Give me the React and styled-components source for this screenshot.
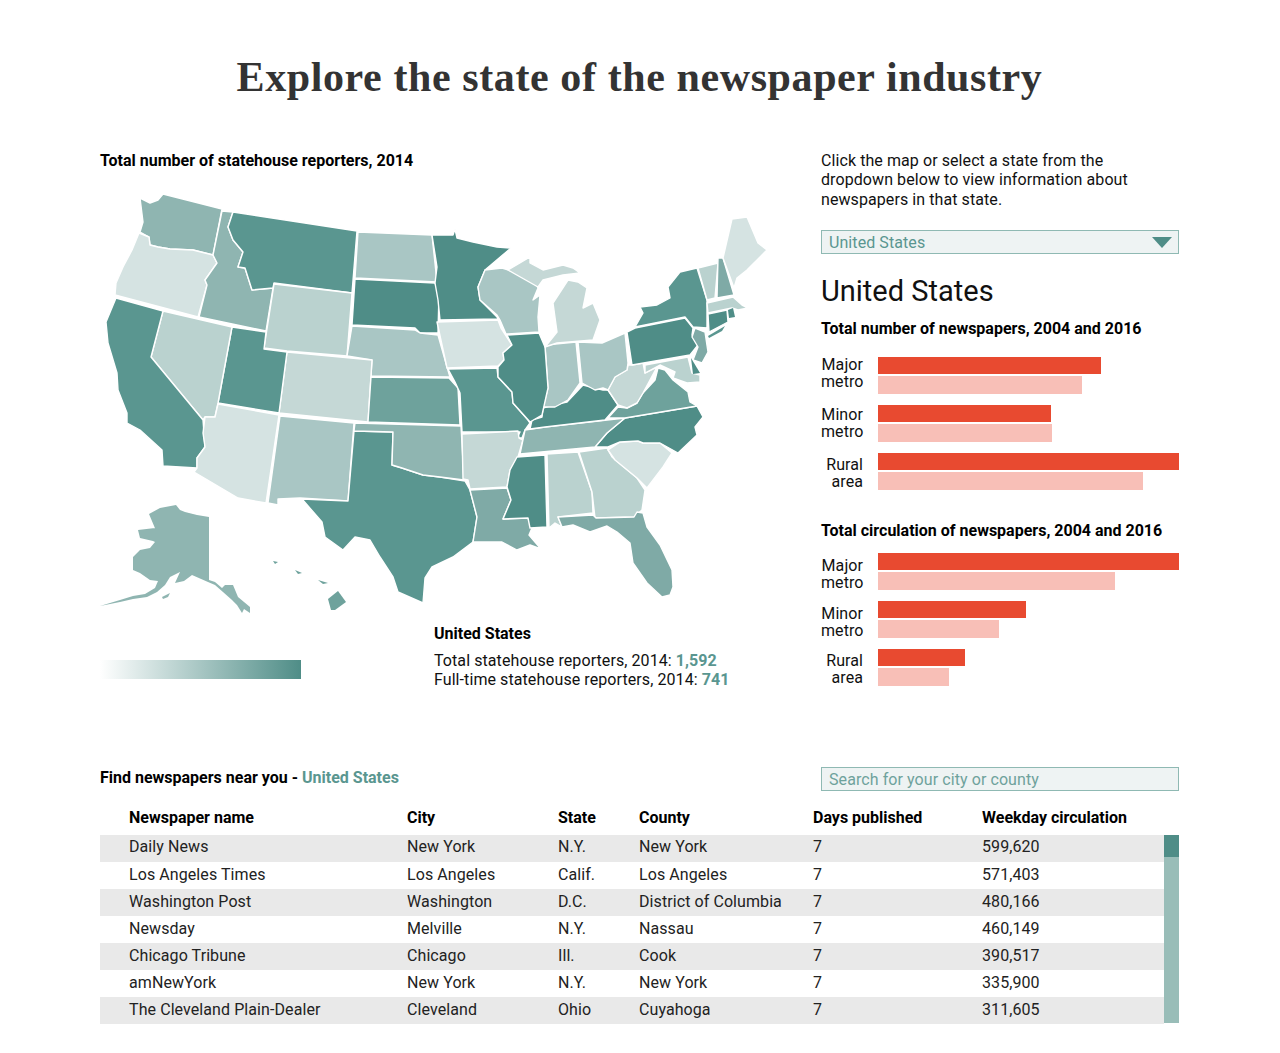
import styled, { createGlobalStyle } from "styled-components";

const GlobalStyle = createGlobalStyle`
  body {
    margin: 0;
    background: #fff;
    color: #111;
    font-family: Roboto, "Liberation Sans", sans-serif;
    font-size: 16px;
    line-height: 19px;
    letter-spacing: 0.08px;
  }
`;

const C = {
  a: "#4f8d87",
  b: "#5a9690",
  c: "#6ea29c",
  d: "#7faaa6",
  e: "#8fb5b1",
  f: "#a9c6c4",
  g: "#bad2cf",
  h: "#c5d8d6",
  i: "#d5e3e2",
};

// page coordinates, traced from the map at 1:1
const STATES = [
  ["e", "140,198 150,203 158,200 163,194 222,209 213,255 193,250 170,249 158,247 150,245 149,237 140,232 143,222"],
  ["i", "139,233 149,237 150,245 158,247 170,249 193,250 213,255 217,263 205,280 207,285 198,317 115,295 116,283 123,267 132,250"],
  ["e", "222,211 233,212 228,227 233,240 243,252 238,267 245,268 252,290 273,288 266,331 199,317 207,285 205,280 217,263 213,255"],
  ["b", "233,212 357,231 352,293 274,283 273,288 252,290 245,268 238,267 243,252 233,240 228,227"],
  ["g", "274,284 352,293 347,356 287,351 264,348"],
  ["f", "358,232 432,235 437,282 355,278"],
  ["a", "355,279 435,283 439,293 438,333 420,333 415,328 352,325"],
  ["f", "352,326 415,330 420,333 438,335 447,367 450,377 371,376 372,360 347,356"],
  ["h", "287,352 372,360 368,422 279,413"],
  ["b", "232,327 266,332 264,349 287,352 279,413 218,403"],
  ["g", "163,311 232,327 218,403 215,417 205,417 203,420 151,357"],
  ["b", "116,298 163,311 151,357 203,420 205,447 197,458 197,468 163,466 162,450 140,430 127,423 127,413 118,390 117,373 108,343 106,322"],
  ["i", "218,404 279,415 266,503 238,498 194,472 197,468 197,458 205,447 203,433 205,417 215,417"],
  ["f", "280,416 354,423 348,501 300,498 278,499 278,505 268,503"],
  ["b", "354,431 393,432 392,465 402,468 423,475 440,477 465,481 470,490 477,517 473,542 453,557 432,567 425,578 423,603 398,592 393,577 380,557 370,540 355,537 343,550 325,537 322,522 302,499 348,501"],
  ["e", "355,423 461,426 464,480 440,477 423,475 402,468 392,465 393,432 354,431"],
  ["c", "371,377 449,378 458,388 460,425 368,422"],
  ["a", "432,235 453,235 455,229 457,238 473,242 497,247 511,248 485,270 478,287 480,300 497,317 498,319 440,320 438,300 435,283 437,267"],
  ["i", "437,322 498,320 501,328 512,345 503,353 504,360 498,366 447,368"],
  ["b", "448,369 497,368 498,377 512,392 513,403 528,420 530,423 525,430 522,438 517,438 520,432 462,432 460,393 455,382"],
  ["h", "462,434 518,431 519,438 523,440 518,457 510,470 507,487 470,489 468,480 463,479"],
  ["d", "470,490 507,488 511,500 503,519 528,518 532,528 529,535 541,549 530,545 517,550 502,542 473,542 477,517"],
  ["a", "517,457 545,455 547,527 530,528 528,518 503,519 511,500 507,487 510,470"],
  ["g", "547,454 578,452 592,492 593,513 558,517 562,527 555,523 549,528"],
  ["g", "579,452 607,448 612,457 637,478 645,490 642,510 634,517 595,518 592,492"],
  ["i", "608,450 620,442 638,441 643,443 660,443 672,453 663,467 647,488 637,478 615,460"],
  ["a", "697,406 703,417 695,427 697,435 678,453 660,443 643,443 638,441 620,442 608,447 595,447 607,433 625,418"],
  ["e", "525,430 545,427 625,418 607,433 595,447 520,454"],
  ["a", "543,408 553,405 567,402 583,385 603,390 608,390 618,405 605,420 545,427 530,429 532,420 542,417"],
  ["c", "608,418 618,407 627,408 637,403 643,393 655,380 658,368 665,370 673,380 688,392 690,402 697,406 625,418"],
  ["h", "628,365 632,365 643,363 645,373 657,367 643,393 637,403 627,408 618,405 608,390 615,377 627,370"],
  ["f", "578,342 602,343 625,333 628,363 627,370 615,377 608,390 603,388 595,390 582,383"],
  ["f", "545,345 576,342 580,383 568,400 555,407 543,407 548,388"],
  ["a", "507,335 539,333 545,347 548,388 542,415 530,422 513,403 512,392 498,377 498,367 504,360 503,353 512,345"],
  ["f", "485,270 502,268 533,278 538,288 533,300 540,295 538,317 539,332 506,334 500,320 497,315 480,300 478,287"],
  ["h", "545,347 557,332 553,303 568,280 578,282 587,288 583,308 593,303 600,320 593,340 557,343"],
  ["h", "508,270 530,257 530,263 543,270 563,265 573,268 580,273 563,275 543,280 538,287"],
  ["a", "627,332 635,328 685,318 693,328 692,335 698,345 690,355 632,365"],
  ["b", "697,268 707,300 707,328 693,327 685,317 635,327 643,313 640,307 657,305 670,298 668,287 680,272"],
  ["d", "695,328 705,332 708,352 702,363 693,360 698,347 692,337"],
  ["g", "698,268 718,263 715,298 707,300"],
  ["d", "718,258 723,258 734,295 717,298"],
  ["i", "723,258 732,219 747,217 758,243 767,250 747,270 737,278 734,288"],
  ["g", "707,303 733,297 742,305 748,308 738,310 732,308 708,313"],
  ["a", "708,314 727,310 728,322 709,332"],
  ["g", "645,365 688,357 692,373 700,375 700,382 687,383 673,378 675,372 660,365 645,373"],
  ["d", "558,517 593,515 596,518 634,517 637,512 643,513 647,527 660,545 672,570 673,587 670,595 662,597 647,583 633,563 630,543 617,532 607,526 590,532 573,525 562,527"],
];

// small pieces that a white outline would eat
const ISLANDS = [
  ["a", "728,310 733,308 735,317 729,318"],
  ["a", "691,358 700,373 693,374"],
  ["b", "708,336 725,326 722,331 709,338"],
  ["e", "149,514 160,508 176,505 180,510 185,512 197,515 209,517 209,580 215,582 222,588 225,585 233,585 238,597 250,607 250,613 244,609 242,613 237,605 232,600 223,592 215,585 208,582 192,575 184,581 175,583 180,572 170,577 165,585 157,592 147,597 133,599 120,602 100,606 120,600 133,596 145,594 155,588 158,581 150,580 140,573 133,570 133,557 140,550 150,548 155,542 153,541 140,538 138,530 155,528 157,533"],
  ["e", "162,597 170,593 168,597 163,599"],
  ["c", "328,599 338,591 346,602 335,610 331,610"],
  ["c", "318,580 328,583 323,584"],
  ["c", "295,570 302,573 298,574"],
  ["c", "273,561 278,562 275,564"],
];

const NEWSPAPER_BARS = [
  { label: ["Major", "metro"], shift: -1, now: 223, then: 204 },
  { label: ["Minor", "metro"], shift: 1, now: 173, then: 174 },
  { label: ["Rural", "area"], shift: 3, now: 301, then: 265 },
];

const CIRCULATION_BARS = [
  { label: ["Major", "metro"], shift: 4, now: 301, then: 237 },
  { label: ["Minor", "metro"], shift: 4, now: 148, then: 121 },
  { label: ["Rural", "area"], shift: 3, now: 87, then: 71 },
];

const PAPERS = [
  ["Daily News", "New York", "N.Y.", "New York", "7", "599,620"],
  ["Los Angeles Times", "Los Angeles", "Calif.", "Los Angeles", "7", "571,403"],
  ["Washington Post", "Washington", "D.C.", "District of Columbia", "7", "480,166"],
  ["Newsday", "Melville", "N.Y.", "Nassau", "7", "460,149"],
  ["Chicago Tribune", "Chicago", "Ill.", "Cook", "7", "390,517"],
  ["amNewYork", "New York", "N.Y.", "New York", "7", "335,900"],
  ["The Cleveland Plain-Dealer", "Cleveland", "Ohio", "Cuyahoga", "7", "311,605"],
];

const HEADERS = ["Newspaper name", "City", "State", "County", "Days published", "Weekday circulation"];

function BarChart({ rows }) {
  return (
    <Bars>
      {rows.map((row) => (
        <BarGroup key={row.label[0]}>
          <BarLabel $shift={row.shift}>
            {row.label[0]}
            <br />
            {row.label[1]}
          </BarLabel>
          <BarPair>
            <Bar style={{ width: row.now }} />
            <Bar $light style={{ width: row.then }} />
          </BarPair>
        </BarGroup>
      ))}
    </Bars>
  );
}

export default function App() {
  return (
    <Page>
      <GlobalStyle />
      <Title>Explore the state of the newspaper industry</Title>
      <Columns>
        <MapColumn>
          <Label>Total number of statehouse reporters, 2014</Label>
          <MapSvg viewBox="100 180 670 440">
            {STATES.map(([tone, points], i) => (
              <polygon key={i} points={points} fill={C[tone]} stroke="#fff" strokeWidth="1.4" strokeLinejoin="round" />
            ))}
            {ISLANDS.map(([tone, points], i) => (
              <polygon key={i} points={points} fill={C[tone]} />
            ))}
          </MapSvg>
          <MapFooter>
            <Legend />
            <Stats>
              <Label>United States</Label>
              <StatLines>
                Total statehouse reporters, 2014: <Num>1,592</Num>
                <br />
                Full-time statehouse reporters, 2014: <Num>741</Num>
              </StatLines>
            </Stats>
          </MapFooter>
        </MapColumn>
        <SideColumn>
          <Intro>
            Click the map or select a state from the dropdown below to view information about newspapers in that state.
          </Intro>
          <Field>
            United States
            <Arrow />
          </Field>
          <StateName>United States</StateName>
          <NewspaperLabel>Total number of newspapers, 2004 and 2016</NewspaperLabel>
          <BarChart rows={NEWSPAPER_BARS} />
          <SecondLabel>Total circulation of newspapers, 2004 and 2016</SecondLabel>
          <BarChart rows={CIRCULATION_BARS} />
        </SideColumn>
      </Columns>
      <FinderHead>
        <Label>
          Find newspapers near you - <Accent>United States</Accent>
        </Label>
        <SearchField>Search for your city or county</SearchField>
      </FinderHead>
      <TableHead>
        {HEADERS.map((h) => (
          <span key={h}>{h}</span>
        ))}
      </TableHead>
      <TableBody>
        <Rows>
          {PAPERS.map((paper) => (
            <Row key={paper[0]}>
              {paper.map((cell, i) => (
                <span key={i}>{cell}</span>
              ))}
            </Row>
          ))}
        </Rows>
        <ScrollTrack>
          <ScrollThumb />
        </ScrollTrack>
      </TableBody>
    </Page>
  );
}

const Page = styled.div`
  box-sizing: border-box;
  width: 1280px;
  height: 1053px;
  padding: 0 101px 0 100px;
  overflow: hidden;
`;

const Title = styled.h1`
  margin: 0;
  padding-top: 55px;
  height: 96px;
  box-sizing: border-box;
  font-family: "Liberation Serif", serif;
  font-size: 42px;
  line-height: 44px;
  font-weight: 700;
  letter-spacing: 0.6px;
  color: #333;
  text-align: center;
`;

const Columns = styled.div`
  display: grid;
  grid-template-columns: 721px 358px;
  padding-top: 55px;
  height: 617px;
  box-sizing: border-box;
`;

const MapColumn = styled.div`
  display: flex;
  flex-direction: column;
`;

const Label = styled.div`
  font-weight: 700;
  letter-spacing: 0;
  color: #000;
`;

const MapSvg = styled.svg`
  display: block;
  width: 670px;
  height: 440px;
  margin-top: 10px;
`;

const MapFooter = styled.div`
  display: flex;
  margin-top: 4px;
`;

const Legend = styled.div`
  width: 201px;
  height: 19px;
  margin-top: 36px;
  background: linear-gradient(to right, #fff, #4f8d87);
`;

const Stats = styled.div`
  margin-left: 133px;
`;

const StatLines = styled.div`
  margin-top: 8px;
`;

const Num = styled.span`
  font-weight: 700;
  color: #5a9690;
`;

const SideColumn = styled.div`
  display: flex;
  flex-direction: column;
`;

const Intro = styled.div`
  width: 330px;
  line-height: 19.3px;
`;

const Field = styled.div`
  position: relative;
  box-sizing: border-box;
  height: 24px;
  margin-top: 21px;
  padding-left: 7px;
  border: 1px solid #8fb9b3;
  background: #eef3f3;
  color: #5a9690;
  line-height: 23px;
`;

const Arrow = styled.span`
  position: absolute;
  right: 6px;
  top: 6px;
  width: 0;
  height: 0;
  border-left: 10px solid transparent;
  border-right: 10px solid transparent;
  border-top: 11px solid #4f8d87;
`;

const StateName = styled.div`
  margin-top: 20px;
  font-size: 29px;
  line-height: 34px;
  letter-spacing: 0;
  color: #111;
`;

const Bars = styled.div`
  display: flex;
  flex-direction: column;
  gap: 11px;
  margin-top: 19px;
`;

const BarGroup = styled.div`
  display: flex;
  height: 37px;
`;

const BarLabel = styled.div`
  width: 42px;
  margin-right: 15px;
  margin-top: ${(p) => p.$shift}px;
  text-align: right;
  line-height: 17px;
  color: #111;
`;

const BarPair = styled.div`
  display: flex;
  flex-direction: column;
  gap: 2px;
`;

const Bar = styled.div`
  height: 17.5px;
  background: ${(p) => (p.$light ? "#f8bfb7" : "#e84a30")};
`;

const NewspaperLabel = styled(Label)`
  margin-top: 11px;
`;

const SecondLabel = styled(Label)`
  margin-top: 31px;
  margin-bottom: -6px;
`;

const FinderHead = styled.div`
  display: flex;
  justify-content: space-between;
  align-items: flex-start;
  padding-top: 54px;
  height: 79px;
  box-sizing: border-box;

  ${Label} {
    margin-top: 1px;
  }
`;

const Accent = styled.span`
  color: #5a9690;
`;

const SearchField = styled.div`
  box-sizing: border-box;
  width: 358px;
  height: 24px;
  padding-left: 7px;
  border: 1px solid #8fb9b3;
  background: #eef3f3;
  color: #6ea29c;
  line-height: 23px;
`;

const COLUMNS = "278px 151px 81px 174px 169px 1fr";

const TableHead = styled.div`
  display: grid;
  grid-template-columns: ${COLUMNS};
  height: 43px;
  box-sizing: border-box;
  padding: 16px 0 0 29px;
  font-weight: 700;
  letter-spacing: 0;
  color: #000;
`;

const TableBody = styled.div`
  display: flex;
  height: 188px;
`;

const Rows = styled.div`
  flex: 1;
`;

const Row = styled.div`
  display: grid;
  grid-template-columns: ${COLUMNS};
  height: 27px;
  padding-left: 29px;
  line-height: 26px;
  color: #222;

  &:first-child {
    line-height: 24px;
  }

  &:nth-child(odd) {
    background: #e9e9e9;
  }
`;

const ScrollTrack = styled.div`
  width: 15px;
  background: #99bdb8;
`;

const ScrollThumb = styled.div`
  height: 22px;
  background: #4f8d87;
`;
